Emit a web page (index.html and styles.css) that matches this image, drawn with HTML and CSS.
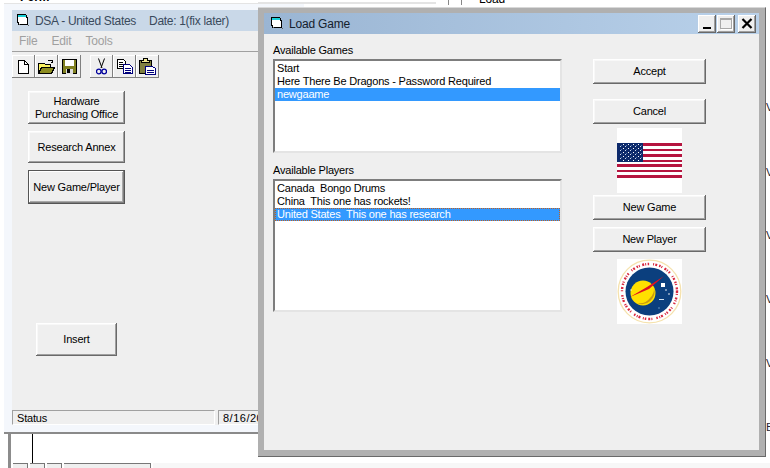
FILE: index.html
```html
<!DOCTYPE html>
<html lang="en">
<head>
<meta charset="utf-8">
<title>Load Game</title>
<link rel="stylesheet" href="styles.css">
</head>
<body>
<div class="desktop">
  <div class="bg-top-form">Form</div>
  <div class="bg-top-line"></div>
  <div class="bg-top-arrow"></div>
  <div class="bg-top-load">Load</div>
  <div class="edge edge-1">V</div>
  <div class="edge edge-2">V</div>
  <div class="edge edge-3">V</div>
  <div class="edge edge-4">V</div>
  <div class="edge edge-5">V</div>
  <div class="edge edge-6">B</div>
  <div class="bg-gutter"></div>
  <div class="bg-vline"></div>
  <div class="bg-bottom">
    <span class="bg-tab bg-tab-s"></span><span class="bg-tab bg-tab-s"></span><span class="bg-tab bg-tab-s"></span><span class="bg-tab bg-tab-l"></span>
    <span class="bg-dither"></span>
  </div>

  <section class="main-window">
    <header class="titlebar main-title">
      <svg class="title-icon" width="14" height="13" viewBox="0 0 14 13" shape-rendering="crispEdges"><path d="M1.500 .5h8l1 1v2h1v7h-9v-2h-1z" fill="#fff" stroke="#000"/><path d="M2 1h8v2H2z" fill="#19d0d8"/><path d="M3 10h1v1H3zM12 11h1v1h-1z" fill="#666"/></svg>
      <span class="main-title-text">DSA - United States</span>
      <span class="main-title-date">Date: 1(fix later)</span>
    </header>
    <nav class="menubar"><span>File</span><span>Edit</span><span>Tools</span></nav>
    <div class="toolbar">
      <div class="tool-group">
        <div class="tool"><svg width="15" height="16" viewBox="0 0 15 16" shape-rendering="crispEdges"><path d="M2.500 1.500h6l4 4v9h-10z" fill="#fff" stroke="#000"/><path d="M8.500 1.500v4h4" fill="none" stroke="#000"/></svg></div>
        <div class="tool"><svg width="18" height="16" viewBox="0 0 18 16" shape-rendering="crispEdges"><path d="M.5 4.500h6l1 1h5v3h-9l-3 6z" fill="#f8f060" stroke="#000"/><path d="M.5 14.500l3-6h13l-3 6z" fill="#8c8c20" stroke="#000"/><path d="M9.500 2.500c1-2 4-2 5 0M14.500 .5v3h-2" fill="none" stroke="#000"/></svg></div>
        <div class="tool"><svg width="15" height="15" viewBox="0 0 15 15" shape-rendering="crispEdges"><path d="M.5.500h14v14H.5z" fill="#808020" stroke="#000"/><path d="M3 1h9v6H3z" fill="#fff"/><path d="M4 10h7v5H4z" fill="#ddd"/><path d="M5 10h3v4H5z" fill="#000"/></svg></div>
      </div>
      <div class="tool-group">
        <div class="tool"><svg width="11" height="17" viewBox="0 0 11 17"><path d="M2.500.5L6 10M8.500.5L5 10" fill="none" stroke="#000"/><circle cx="2.800" cy="13.500" r="2.300" fill="none" stroke="#00009c" stroke-width="1.300"/><circle cx="8.200" cy="13.500" r="2.300" fill="none" stroke="#00009c" stroke-width="1.300"/></svg></div>
        <div class="tool"><svg width="16" height="15" viewBox="0 0 16 15" shape-rendering="crispEdges"><path d="M.5.500h6l2 2v7H.5z" fill="#fff" stroke="#000"/><path d="M2 3h4M2 5h4M2 7h4" stroke="#000"/><path d="M6.500 5.500h6l3 3v6h-9z" fill="#fff" stroke="#00007c"/><path d="M8 9h6M8 11h6M8 13h6" stroke="#00007c"/></svg></div>
        <div class="tool"><svg width="17" height="17" viewBox="0 0 17 17" shape-rendering="crispEdges"><path d="M.5 2.500h12v13H.5z" fill="#808040" stroke="#000"/><path d="M4.500.5h4v2h2v2h-8v-2h2z" fill="#f0e890" stroke="#000"/><path d="M6.500 8.500h7l3 2v6h-10z" fill="#fff" stroke="#00007c"/><path d="M8 12h7M8 14h7" stroke="#00007c"/></svg></div>
      </div>
    </div>
    <div class="side-actions">
      <button class="btn btn-wide btn-tall">Hardware<br>Purchasing Office</button>
      <button class="btn btn-wide btn-research">Research Annex</button>
      <button class="btn btn-wide btn-default">New Game/Player</button>
    </div>
    <button class="btn btn-insert">Insert</button>
    <footer class="statusbar">
      <div class="status-cell status-main">Status</div>
      <div class="status-cell status-date">8/16/2015</div>
    </footer>
  </section>

  <section class="dialog">
    <header class="titlebar dialog-title">
      <svg class="title-icon" width="14" height="13" viewBox="0 0 14 13" shape-rendering="crispEdges"><path d="M1.500 .5h8l1 1v2h1v7h-9v-2h-1z" fill="#fff" stroke="#000"/><path d="M2 1h8v2H2z" fill="#19d0d8"/><path d="M3 10h1v1H3zM12 11h1v1h-1z" fill="#666"/></svg>
      <span class="dialog-title-text">Load Game</span>
      <div class="win-btns">
        <div class="win-btn"><span class="glyph-min"></span></div>
        <div class="win-btn win-btn-off"><span class="glyph-max"></span></div>
        <div class="win-btn win-btn-close"><svg width="12" height="11" viewBox="0 0 12 11"><path d="M1.500 1l9 9M10.500 1l-9 9" stroke="#000" stroke-width="2.200" fill="none"/></svg></div>
      </div>
    </header>
    <div class="dialog-body">
      <div class="lists">
        <label class="list-label">Available Games</label>
        <ul class="listbox listbox-games">
          <li>Start</li>
          <li>Here There Be Dragons - Password Required</li>
          <li class="sel">newgaame</li>
        </ul>
        <label class="list-label list-label-2">Available Players</label>
        <ul class="listbox listbox-players">
          <li>Canada&nbsp; Bongo Drums</li>
          <li>China&nbsp; This one has rockets!</li>
          <li class="sel focus">United States&nbsp; This one has research</li>
        </ul>
      </div>
      <div class="actions">
        <button class="btn btn-dlg btn-accept">Accept</button>
        <button class="btn btn-dlg btn-cancel">Cancel</button>
        <svg class="pic" width="65" height="65" viewBox="0 0 65 65" shape-rendering="crispEdges">
          <defs>
            <pattern id="stars" width="5" height="4" patternUnits="userSpaceOnUse">
              <rect x="1" y="0" width="1" height="1" fill="#fff"/>
              <rect x="3" y="2" width="1" height="1" fill="#c8d8ec"/>
              <rect x="4" y="1" width="1" height="1" fill="#4f72a8"/>
            </pattern>
          </defs>
          <rect width="65" height="65" fill="#fff"/>
          <rect y="15" width="65" height="3" fill="#b5153f"/>
          <rect y="21" width="65" height="2" fill="#b5153f"/>
          <rect y="26" width="65" height="3" fill="#b5153f"/>
          <rect y="32" width="65" height="2" fill="#b5153f"/>
          <rect y="36" width="65" height="3" fill="#b5153f"/>
          <rect y="42" width="65" height="2" fill="#b5153f"/>
          <rect y="47" width="65" height="3" fill="#b5153f"/>
          <rect y="15" width="26" height="19" fill="#0d2a6b"/>
          <rect x="2" y="16" width="23" height="17" fill="url(#stars)"/>
        </svg>
        <button class="btn btn-dlg btn-newgame">New Game</button>
        <button class="btn btn-dlg btn-newplayer">New Player</button>
        <svg class="pic pic-seal" width="65" height="65" viewBox="0 0 65 65">
          <rect width="65" height="65" fill="#fff"/>
          <circle cx="32.500" cy="32.500" r="31.300" fill="#fff" stroke="#f5e2ad" stroke-width="1.300"/>
          <circle cx="32.500" cy="32.500" r="27.500" fill="none" stroke="#d8293f" stroke-width="2.400" stroke-dasharray="1.500 1 1 2.500 2 1 1 1.500 1.500 4 1 1.200 2 2"/>
          <circle cx="32.500" cy="32.500" r="24" fill="#0b3f7e"/>
          <circle cx="26" cy="34" r="12.500" fill="#ffe000"/>
          <path d="M20 44a12.500 12.500 0 0 0 17-15a13 13 0 0 1-4 10a13 13 0 0 1-13 5z" fill="#c99a10"/>
          <path d="M13 38L30 28L47 17L32 30z" fill="#e01020"/>
          <rect x="44" y="24" width="4" height="4" fill="#fff"/>
          <circle cx="49" cy="31" r=".8" fill="#fff"/>
          <circle cx="52" cy="35" r=".8" fill="#fff"/>
          <rect x="42" y="40" width="5" height="1" fill="#cfe0f0"/>
          <circle cx="14" cy="31" r=".7" fill="#fff"/>
          <circle cx="42" cy="49" r=".7" fill="#7fb0d8"/>
        </svg>
      </div>
    </div>
  </section>
</div>
</body>
</html>
```
FILE: styles.css
```css
* { box-sizing: border-box; }
html, body { margin: 0; padding: 0; background: #fff; }
body { width: 770px; height: 468px; overflow: hidden; }
.desktop {
  position: relative;
  width: 770px;
  height: 468px;
  overflow: hidden;
  font-family: "Liberation Sans", Arial, sans-serif;
  font-size: 11px;
  letter-spacing: -0.2px;
  color: #000;
}

/* Fragments of what sits behind the windows */
.bg-top-form { position: absolute; left: 20px; top: -10px; font-size: 12px; font-weight: bold; }
.bg-top-line { position: absolute; left: 258px; top: 2px; width: 178px; height: 2px; background: #e4e4e4; }
.bg-top-arrow { position: absolute; left: 448px; top: 0; width: 14px; height: 5px; border-left: 1px solid #888; border-right: 1px solid #888; }
.bg-top-load { position: absolute; left: 479px; top: -8px; font-size: 12px; line-height: 14px; }
.edge { position: absolute; left: 766px; font-size: 11px; line-height: 12px; color: #223; }
.edge-1 { top: 101px; }
.edge-2 { top: 166px; }
.edge-3 { top: 229px; }
.edge-4 { top: 293px; }
.edge-5 { top: 357px; }
.edge-6 { top: 421px; }
.bg-gutter { position: absolute; left: 8px; top: 433px; width: 3px; height: 35px; background: #8c8c8c; }
.bg-vline { position: absolute; left: 32px; top: 433px; width: 1px; height: 30px; background: #000; }
.bg-bottom { position: absolute; left: 13px; top: 463px; width: 757px; height: 5px; display: flex; gap: 2px; }
.bg-tab { display: block; height: 5px; background: #efefef; border-top: 1px solid #777; border-right: 1px solid #777; }
.bg-tab-s { width: 15px; }
.bg-tab-l { width: 87px; }
.bg-dither { flex: 1; background: #f7f7f7; }

/* Main (background) window */
.main-window {
  position: absolute;
  left: 4px;
  top: 3px;
  width: 300px;
  height: 431px;
  padding: 6px 0 7px 8px;
  background: #f4f7fc;
  border-top: 1px solid #e4e4e4;
  border-bottom: 2px solid #8a8a8a;
  display: flex;
  flex-direction: column;
}
.main-window::before {
  content: "";
  position: absolute;
  left: 8px;
  top: 6px;
  right: 0;
  bottom: 7px;
  background: #efefef;
}
.main-window > * { position: relative; }
.titlebar { display: flex; align-items: center; }
.main-title {
  height: 21px;
  padding-left: 4px;
  background: #c9d8e8;
  font-size: 12px;
  letter-spacing: -0.3px;
  color: #3a4a5c;
  flex: none;
}
.title-icon { flex: none; }
.main-title-text { margin-left: 5px; }
.main-title-date { margin-left: 13px; }
.menubar {
  height: 21px;
  flex: none;
  display: flex;
  gap: 14px;
  align-items: center;
  padding: 0 0 1px 7px;
  border-bottom: 1px solid #a0a0a0;
  font-size: 12px;
  color: #a0a0a0;
}
.toolbar {
  flex: none;
  display: flex;
  gap: 9px;
  padding-top: 3px;
  height: 26px;
}
.tool-group { display: flex; gap: 0; }
.tool {
  width: 23px;
  height: 23px;
  display: flex;
  align-items: center;
  justify-content: center;
  background: #efefef;
  box-shadow: inset -1px -1px #808080, inset 1px 1px #fff;
}
.side-actions {
  flex: none;
  display: flex;
  flex-direction: column;
  align-items: flex-start;
  gap: 7px;
  padding: 13px 0 0 16px;
}
.btn {
  display: block;
  padding: 0;
  border: 0;
  background: #efefef;
  font-family: "Liberation Sans", Arial, sans-serif;
  font-size: 11px;
  letter-spacing: -0.2px;
  line-height: 13px;
  color: #000;
  text-align: center;
  box-shadow: inset -1px -1px #696969, inset 1px 1px #fff, inset -2px -2px #a0a0a0, inset 2px 2px #f8f8f8;
}
.btn-wide { width: 97px; height: 32px; }
.btn-tall { height: 33px; }
.btn-default { height: 34px; box-shadow: inset 0 0 0 1px #555, inset -2px -2px #808080, inset 2px 2px #fff, inset -3px -3px #a8a8a8; }
.btn-insert { width: 81px; height: 33px; }
.main-window > .btn-insert { align-self: flex-start; margin: 119px 0 0 24px; }
.statusbar {
  margin-top: auto;
  flex: none;
  display: flex;
  gap: 3px;
  height: 15px;
}
.status-cell {
  height: 15px;
  padding-left: 4px;
  line-height: 14px;
  border-top: 1px solid #a0a0a0;
  border-left: 1px solid #a0a0a0;
  border-bottom: 1px solid #fff;
  border-right: 1px solid #fff;
  font-size: 11px;
  white-space: nowrap;
  overflow: hidden;
}
.status-main { width: 203px; }
.status-date { width: 70px; letter-spacing: 0.5px; }

/* Load Game dialog */
.dialog {
  position: absolute;
  left: 258px;
  top: 7px;
  width: 508px;
  height: 450px;
  background: #b0b0b0;
  border-right: 1px solid #696969;
  border-bottom: 1px solid #696969;
  border-top: 1px solid #d8d8d8;
  padding: 5px 6px 6px 6px;
  display: flex;
  flex-direction: column;
}
.dialog-title {
  height: 21px;
  flex: none;
  padding: 0 3px 0 6px;
  background: linear-gradient(to right, #9ab5d3, #b9d1ea);
  font-size: 12px;
  color: #14202c;
}
.dialog-title-text { margin-left: 5px; }
.win-btns { margin-left: auto; display: flex; gap: 1px; }
.win-btn {
  width: 18px;
  height: 18px;
  background: #efefef;
  display: flex;
  align-items: center;
  justify-content: center;
  box-shadow: inset -1px -1px #696969, inset 1px 1px #fff, inset -2px -2px #a0a0a0;
}
.win-btn-off { margin-right: 2px; }
.glyph-min { width: 8px; height: 2px; background: #000; margin-top: 8px; margin-right: 1px; }
.glyph-max { width: 12px; height: 11px; border: 1px solid #a8a8a8; border-top-width: 2px; box-shadow: 1px 1px #fff; }
.dialog-body {
  flex: 1;
  display: flex;
  background: #efefef;
  padding: 9px 0 0 9px;
}
.lists { width: 289px; flex: none; display: flex; flex-direction: column; }
.list-label { display: block; height: 16px; line-height: 14px; font-size: 11px; }
.list-label-2 { margin-top: 10px; }
.listbox {
  list-style: none;
  margin: 0;
  padding: 1px 0 0 0;
  background: #fff;
  border-top: 2px solid #7d7d7d;
  border-left: 2px solid #7d7d7d;
  border-right: 2px solid #e4e4e4;
  border-bottom: 2px solid #e4e4e4;
}
.listbox-games { height: 94px; }
.listbox-players { height: 133px; }
.listbox li { height: 13px; line-height: 13px; padding-left: 2px; white-space: nowrap; }
.listbox .sel { background: #3399ff; color: #fff; }
.listbox .focus { outline: 1px dotted #c06020; outline-offset: -1px; }
.actions {
  flex: none;
  margin-left: 31px;
  width: 113px;
  display: flex;
  flex-direction: column;
  align-items: center;
}
.btn-dlg { width: 113px; height: 25px; }
.btn-accept { margin-top: 16px; }
.btn-cancel { margin-top: 15px; }
.pic { display: block; flex: none; }
.actions svg.pic { margin-top: 4px; }
.btn-newgame { margin-top: 2px; }
.btn-newplayer { margin-top: 7px; }
.actions svg.pic-seal { margin-top: 7px; }
```
